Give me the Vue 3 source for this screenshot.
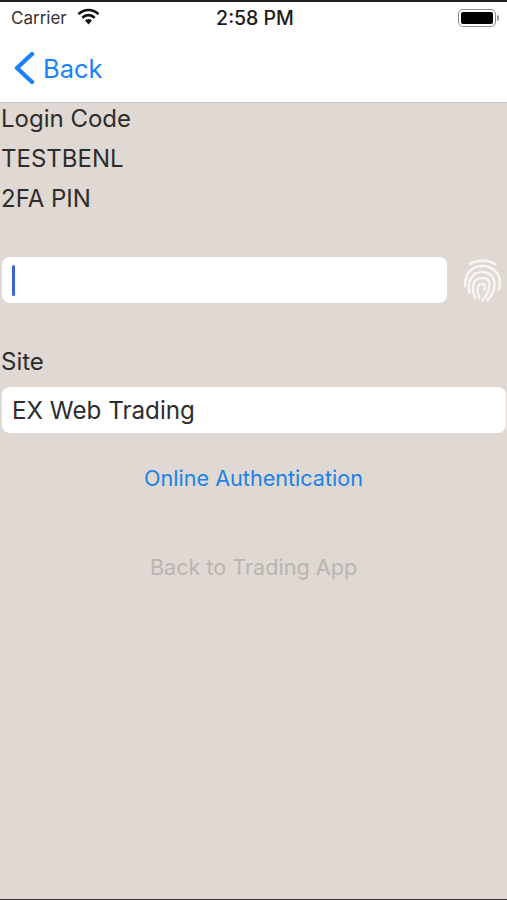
<template>
  <div class="screen">
    <header class="top">
      <div class="status">
        <div class="status-left">
          <span class="carrier">Carrier</span>
          <svg class="wifi" width="23" height="17" viewBox="0 0 23 17">
            <path d="M1.5 6.2 A14 14 0 0 1 21.5 6.2" fill="none" stroke="#111" stroke-width="2.6" />
            <path d="M5.3 9.8 A8.6 8.6 0 0 1 17.7 9.8" fill="none" stroke="#111" stroke-width="2.6" />
            <path d="M8 12.6 A4.8 4.8 0 0 1 15 12.6 L11.5 16.4 Z" fill="#111" />
          </svg>
        </div>
        <span class="time">2:58 PM</span>
        <div class="battery">
          <div class="battery-body"><div class="battery-fill"></div></div>
          <div class="battery-tip"></div>
        </div>
      </div>
      <nav class="nav">
        <svg class="chevron" width="22" height="34" viewBox="0 0 22 34">
          <path d="M19 3 L4 17 L19 31" fill="none" stroke="#1a82f7" stroke-width="4.4" stroke-linecap="round" stroke-linejoin="round" />
        </svg>
        <span class="back">Back</span>
      </nav>
    </header>

    <main class="content">
      <div class="line">Login Code</div>
      <div class="line">TESTBENL</div>
      <div class="line">2FA PIN</div>

      <div class="pin-row">
        <div class="field pin-field"><span class="caret"></span></div>
        <svg class="finger" width="37" height="43" viewBox="0 0 37 43" fill="none" stroke="#f8f5f1" stroke-width="2.6" stroke-linecap="round">
          <path d="M6 5 C13 0.5 24 0.5 31 5" />
          <path d="M1.2 27 C0.5 14 9 7 18 7 C28 7 36 14 36 24 C36 26 35.8 28 35 30" />
          <path d="M5.5 34 C3 22 8 13 18 13 C25 13 30.5 18 30.5 25 C30.5 31 27.5 37 23.5 41" />
          <path d="M11 39 C7 29 8.5 19 18 19 C23 19 25.5 22 25.5 26 C25.5 31 22.5 37 18.5 41.5" />
          <path d="M15.5 39 C12.5 32 13 25 18 24.8 C21 24.8 21.4 27.5 20.4 31" />
        </svg>
      </div>

      <div class="line site-label">Site</div>
      <div class="field site-field">EX Web Trading</div>

      <a class="link">Online Authentication</a>
      <a class="link disabled">Back to Trading App</a>
    </main>
  </div>
</template>

<script setup>
</script>

<style>
html, body {
  margin: 0;
  background: #e0d8d2;
}
</style>

<style scoped>
.screen {
  box-sizing: border-box;
  width: 507px;
  height: 900px;
  display: flex;
  flex-direction: column;
  overflow: hidden;
  background: #e0d8d2;
  border-top: 2px solid #222;
  border-bottom: 1px solid #33332f;
  font-family: Inter, "Liberation Sans", sans-serif;
  color: #2d2d2d;
}

.top {
  background: #fff;
  height: 100px;
  border-bottom: 1px solid #c9c3bd;
  box-sizing: content-box;
}

.status {
  height: 32px;
  display: grid;
  grid-template-columns: 1fr auto 1fr;
  align-items: center;
  padding: 0 8px 0 11px;
}

.status-left {
  display: flex;
  align-items: center;
  gap: 10px;
}

.carrier {
  font-size: 17px;
  color: #333;
}

.time {
  font-size: 19.5px;
  font-weight: 500;
  color: #1c1c1c;
}

.wifi {
  margin-bottom: 3px;
}

.battery {
  justify-self: end;
  display: flex;
  align-items: center;
  gap: 1px;
}

.battery-body {
  width: 38px;
  height: 18px;
  box-sizing: border-box;
  border: 1.5px solid #8d8d8d;
  border-radius: 5px;
  padding: 2px;
}

.battery-fill {
  height: 100%;
  background: #000;
  border-radius: 2px;
}

.battery-tip {
  width: 2px;
  height: 6px;
  background: #999;
  border-radius: 0 2px 2px 0;
}

.nav {
  display: flex;
  align-items: center;
  gap: 8px;
  height: 68px;
  padding-left: 13px;
  color: #1a82f7;
}

.back {
  font-size: 25.5px;
}

.content {
  display: flex;
  flex-direction: column;
}

.line {
  font-size: 24px;
  height: 40px;
  line-height: 32px;
  padding-left: 1px;
}

.pin-row {
  display: flex;
  align-items: center;
  gap: 17px;
  margin-top: 34px;
  padding-left: 2px;
}

.field {
  box-sizing: border-box;
  height: 46px;
  background: #fff;
  border-radius: 8px;
  display: flex;
  align-items: center;
  padding-left: 10px;
}

.pin-field {
  width: 445px;
}

.caret {
  width: 3px;
  height: 31px;
  background: #3a63dc;
  border-radius: 2px;
}

.site-label {
  margin-top: 43px;
  height: 41px;
}

.site-field {
  width: 504px;
  margin-left: 2px;
  font-size: 24.2px;
}

.link {
  align-self: center;
  margin-top: 29px;
  font-size: 21.6px;
  line-height: 32px;
  color: #1a82e8;
}

.link.disabled {
  margin-top: 57px;
  color: #b9b5b0;
}
</style>
